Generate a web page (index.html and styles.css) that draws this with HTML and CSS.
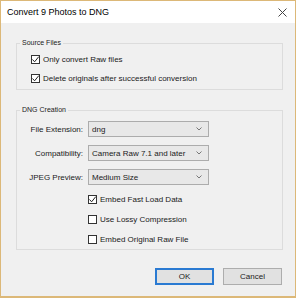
FILE: index.html
```html
<!DOCTYPE html>
<html>
<head>
    <title>Convert 9 Photos to DNG</title>
    <link rel="stylesheet" href="styles.css">
</head>
<body>
    <div class="window">
        <div class="titlebar">
            <span class="title">Convert 9 Photos to DNG</span>
            <svg class="close" width="9" height="9" viewBox="0 0 9 9"><path d="M0.5 0.5 L8.5 8.5 M8.5 0.5 L0.5 8.5" stroke="#444" stroke-width="1" fill="none"/></svg>
        </div>

        <div class="content">
            <fieldset class="group group-source">
                <legend>Source Files</legend>
                <div class="check-row">
                    <span class="box checked"><svg width="9" height="9" viewBox="0 0 9 9"><path d="M1.5 4.5 L3.6 6.8 L7.8 1.6" stroke="#222" stroke-width="1" fill="none"/></svg></span>
                    <span>Only convert Raw files</span>
                </div>
                <div class="check-row">
                    <span class="box checked"><svg width="9" height="9" viewBox="0 0 9 9"><path d="M1.5 4.5 L3.6 6.8 L7.8 1.6" stroke="#222" stroke-width="1" fill="none"/></svg></span>
                    <span>Delete originals after successful conversion</span>
                </div>
            </fieldset>

            <fieldset class="group group-dng">
                <legend>DNG Creation</legend>
                <div class="field-row">
                    <span class="field-label">File Extension:</span>
                    <div class="select"><span>dng</span><svg width="6" height="4" viewBox="0 0 6 4"><path d="M0.5 0.5 L3 3 L5.5 0.5" stroke="#777" fill="none"/></svg></div>
                </div>
                <div class="field-row">
                    <span class="field-label">Compatibility:</span>
                    <div class="select"><span>Camera Raw 7.1 and later</span><svg width="6" height="4" viewBox="0 0 6 4"><path d="M0.5 0.5 L3 3 L5.5 0.5" stroke="#777" fill="none"/></svg></div>
                </div>
                <div class="field-row">
                    <span class="field-label">JPEG Preview:</span>
                    <div class="select"><span>Medium Size</span><svg width="6" height="4" viewBox="0 0 6 4"><path d="M0.5 0.5 L3 3 L5.5 0.5" stroke="#777" fill="none"/></svg></div>
                </div>
                <div class="check-row indent">
                    <span class="box checked"><svg width="9" height="9" viewBox="0 0 9 9"><path d="M1.5 4.5 L3.6 6.8 L7.8 1.6" stroke="#222" stroke-width="1" fill="none"/></svg></span>
                    <span>Embed Fast Load Data</span>
                </div>
                <div class="check-row indent">
                    <span class="box"></span>
                    <span>Use Lossy Compression</span>
                </div>
                <div class="check-row indent">
                    <span class="box"></span>
                    <span>Embed Original Raw File</span>
                </div>
            </fieldset>

            <div class="buttons">
                <button class="button default">OK</button>
                <button class="button">Cancel</button>
            </div>
        </div>
    </div>
</body>
</html>
```

FILE: styles.css
```css
body { margin: 0; font-family: "Liberation Sans", Arial, sans-serif; font-size: 8px; color: #1a1a1a; }
.window {
    width: 296px; height: 298px; box-sizing: border-box;
    border: 1px solid #dcb878; border-bottom-width: 2px; background: #f0f0f0;
}
.titlebar {
    height: 22px; background: #fff; display: flex; align-items: center;
    justify-content: space-between; padding: 0 8px 0 6px;
}
.title { font-size: 9px; color: #000; }
.close { margin-top: 1px; }
.content { padding: 15px 12px 0 15px; }

.group {
    margin: 0; padding: 2px 0 1px 0; min-width: 0;
    border: 1px solid #dcdcdc;
}
.group legend {
    font-size: 7px; line-height: 10px; padding: 0 2px; margin-left: 3px; color: #222;
}
.group-source .check-row { padding-left: 14px; }
.group-dng { margin-top: 15px; padding-bottom: 0; }

.check-row { height: 19px; display: flex; align-items: center; gap: 3px; white-space: nowrap; }
.group-dng .check-row { height: 20px; }
.indent { padding-left: 71px; }
.box {
    width: 9px; height: 9px; box-sizing: border-box; border: 1px solid #333;
    background: #fff; display: flex;
}
.box svg { margin: -1px; }

.field-row { height: 24px; display: flex; align-items: center; white-space: nowrap; }
.field-label { width: 66px; text-align: right; margin-right: 5px; }
.select {
    width: 121px; height: 16px; box-sizing: border-box; border: 1px solid #acacac;
    background: #e8e8e8; display: flex; align-items: center; justify-content: space-between;
    padding: 0 6px 0 3px;
}

.buttons { display: flex; justify-content: flex-end; gap: 9px; margin-top: 18px; padding-right: 1px; }
.button {
    width: 59px; height: 17px; box-sizing: border-box; padding: 0;
    font-family: inherit; font-size: 8px; color: #222;
    background: #e1e1e1; border: 1px solid #adadad;
}
.default { border: 2px solid #2a7ad2; }
```
